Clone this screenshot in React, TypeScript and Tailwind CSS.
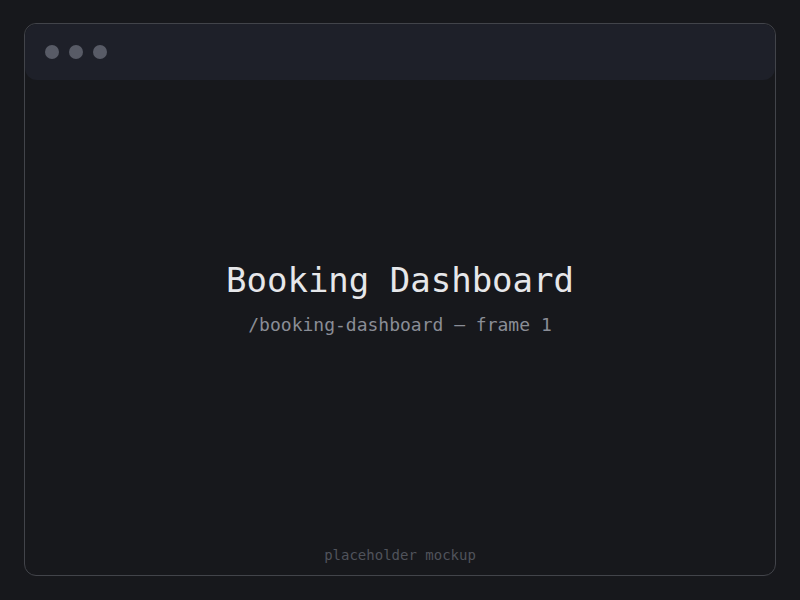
export default function App() {
  return (
    <div className="w-[800px] h-[600px] bg-[#17181c] p-6 pt-[23px] font-['DejaVu_Sans_Mono',monospace]">
      <div className="h-[553px] flex flex-col rounded-xl border-[1.5px] border-[#42444a] bg-[#17181c]">
        <div className="h-[56px] flex items-center gap-2.5 px-5 rounded-xl bg-[#1e2029]">
          <span className="w-3.5 h-3.5 rounded-full bg-[#585b66]" />
          <span className="w-3.5 h-3.5 rounded-full bg-[#585b66]" />
          <span className="w-3.5 h-3.5 rounded-full bg-[#585b66]" />
        </div>

        <div className="flex-1 flex flex-col items-center justify-center pb-[29px]">
          <h1 className="text-[34px] leading-[40px] text-[#e6e7ea]">Booking Dashboard</h1>
          <p className="mt-[13px] text-[18px] leading-6 text-[#8a8d96]">
            /booking-dashboard — frame 1
          </p>
        </div>

        <div className="pb-[10px] text-center text-[14px] leading-5 text-[#50535b]">
          placeholder mockup
        </div>
      </div>
    </div>
  );
}
